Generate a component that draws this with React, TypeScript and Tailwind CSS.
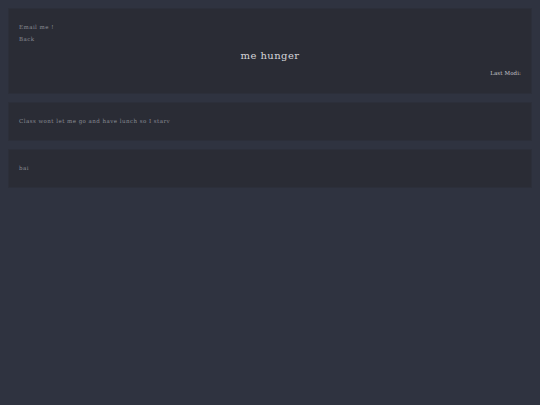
export default function App() {
  return (
    <div className="min-h-[405px] bg-[#2f3340] p-2 font-['DejaVu_Serif',serif] text-[5.5px] leading-[7px] tracking-[0.46px] text-[#8b8e96]">
      <div className="flex flex-col gap-2">
        {/* header card */}
        <div className="h-[86px] border border-[#2c2f3a] bg-[#2a2c35] px-[10px] pt-[15px]">
          <p>Email me !</p>
          <p className="mt-[5px]">Back</p>
          <h1 className="mt-[6px] text-center text-[10px] leading-[14px] tracking-[0.45px] text-[#d4d5d9]">me hunger</h1>
          <p className="mt-[7px] text-right tracking-[0.1px] text-[#c4c5ca]">Last Modi:</p>
        </div>

        <div className="h-[39px] border border-[#2c2f3a] bg-[#2a2c35] px-[10px] pt-[15px]">
          <p>Class wont let me go and have lunch so I starv</p>
        </div>

        <div className="h-[39px] border border-[#2c2f3a] bg-[#2a2c35] px-[10px] pt-[15px]">
          <p>bai</p>
        </div>
      </div>
    </div>
  );
}
